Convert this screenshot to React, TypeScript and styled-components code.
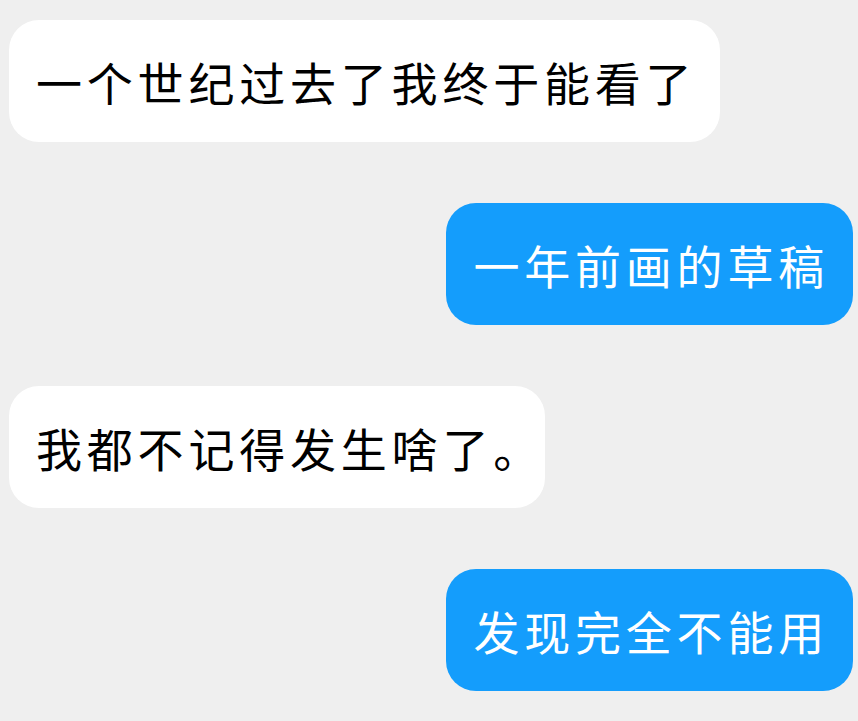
import React from "react";
import styled, { createGlobalStyle } from "styled-components";

const GlobalStyle = createGlobalStyle`
  html, body {
    margin: 0;
    padding: 0;
    background: #efefef;
  }
  body {
    font-family: "Noto Sans CJK SC", "Noto Sans", sans-serif;
  }
`;

type Message = {
  text: string;
  mine: boolean;
};

const messages: Message[] = [
  { text: "一个世纪过去了我终于能看了", mine: false },
  { text: "一年前画的草稿", mine: true },
  { text: "我都不记得发生啥了。", mine: false },
  { text: "发现完全不能用", mine: true },
];

const Thread = styled.div`
  display: flex;
  flex-direction: column;
  gap: 61px;
  padding: 20px 5px 30px 9px;
  width: 858px;
  box-sizing: border-box;
`;

const Row = styled.div<{ $mine: boolean }>`
  display: flex;
  justify-content: ${({ $mine }) => ($mine ? "flex-end" : "flex-start")};
`;

// half-width punctuation keeps the trailing 。 tight against the edge
const Bubble = styled.div<{ $mine: boolean }>`
  height: 122px;
  line-height: 122px;
  padding: 0 24px 0 27px;
  border-radius: 30px;
  font-size: 46px;
  font-feature-settings: "halt";
  white-space: nowrap;
  letter-spacing: 4.8px;
  background: ${({ $mine }) => ($mine ? "#149dfc" : "#ffffff")};
  color: ${({ $mine }) => ($mine ? "#ffffff" : "#000000")};
`;

export default function App() {
  return (
    <>
      <GlobalStyle />
      <Thread>
        {messages.map((m, i) => (
          <Row key={i} $mine={m.mine}>
            <Bubble $mine={m.mine}>{m.text}</Bubble>
          </Row>
        ))}
      </Thread>
    </>
  );
}
